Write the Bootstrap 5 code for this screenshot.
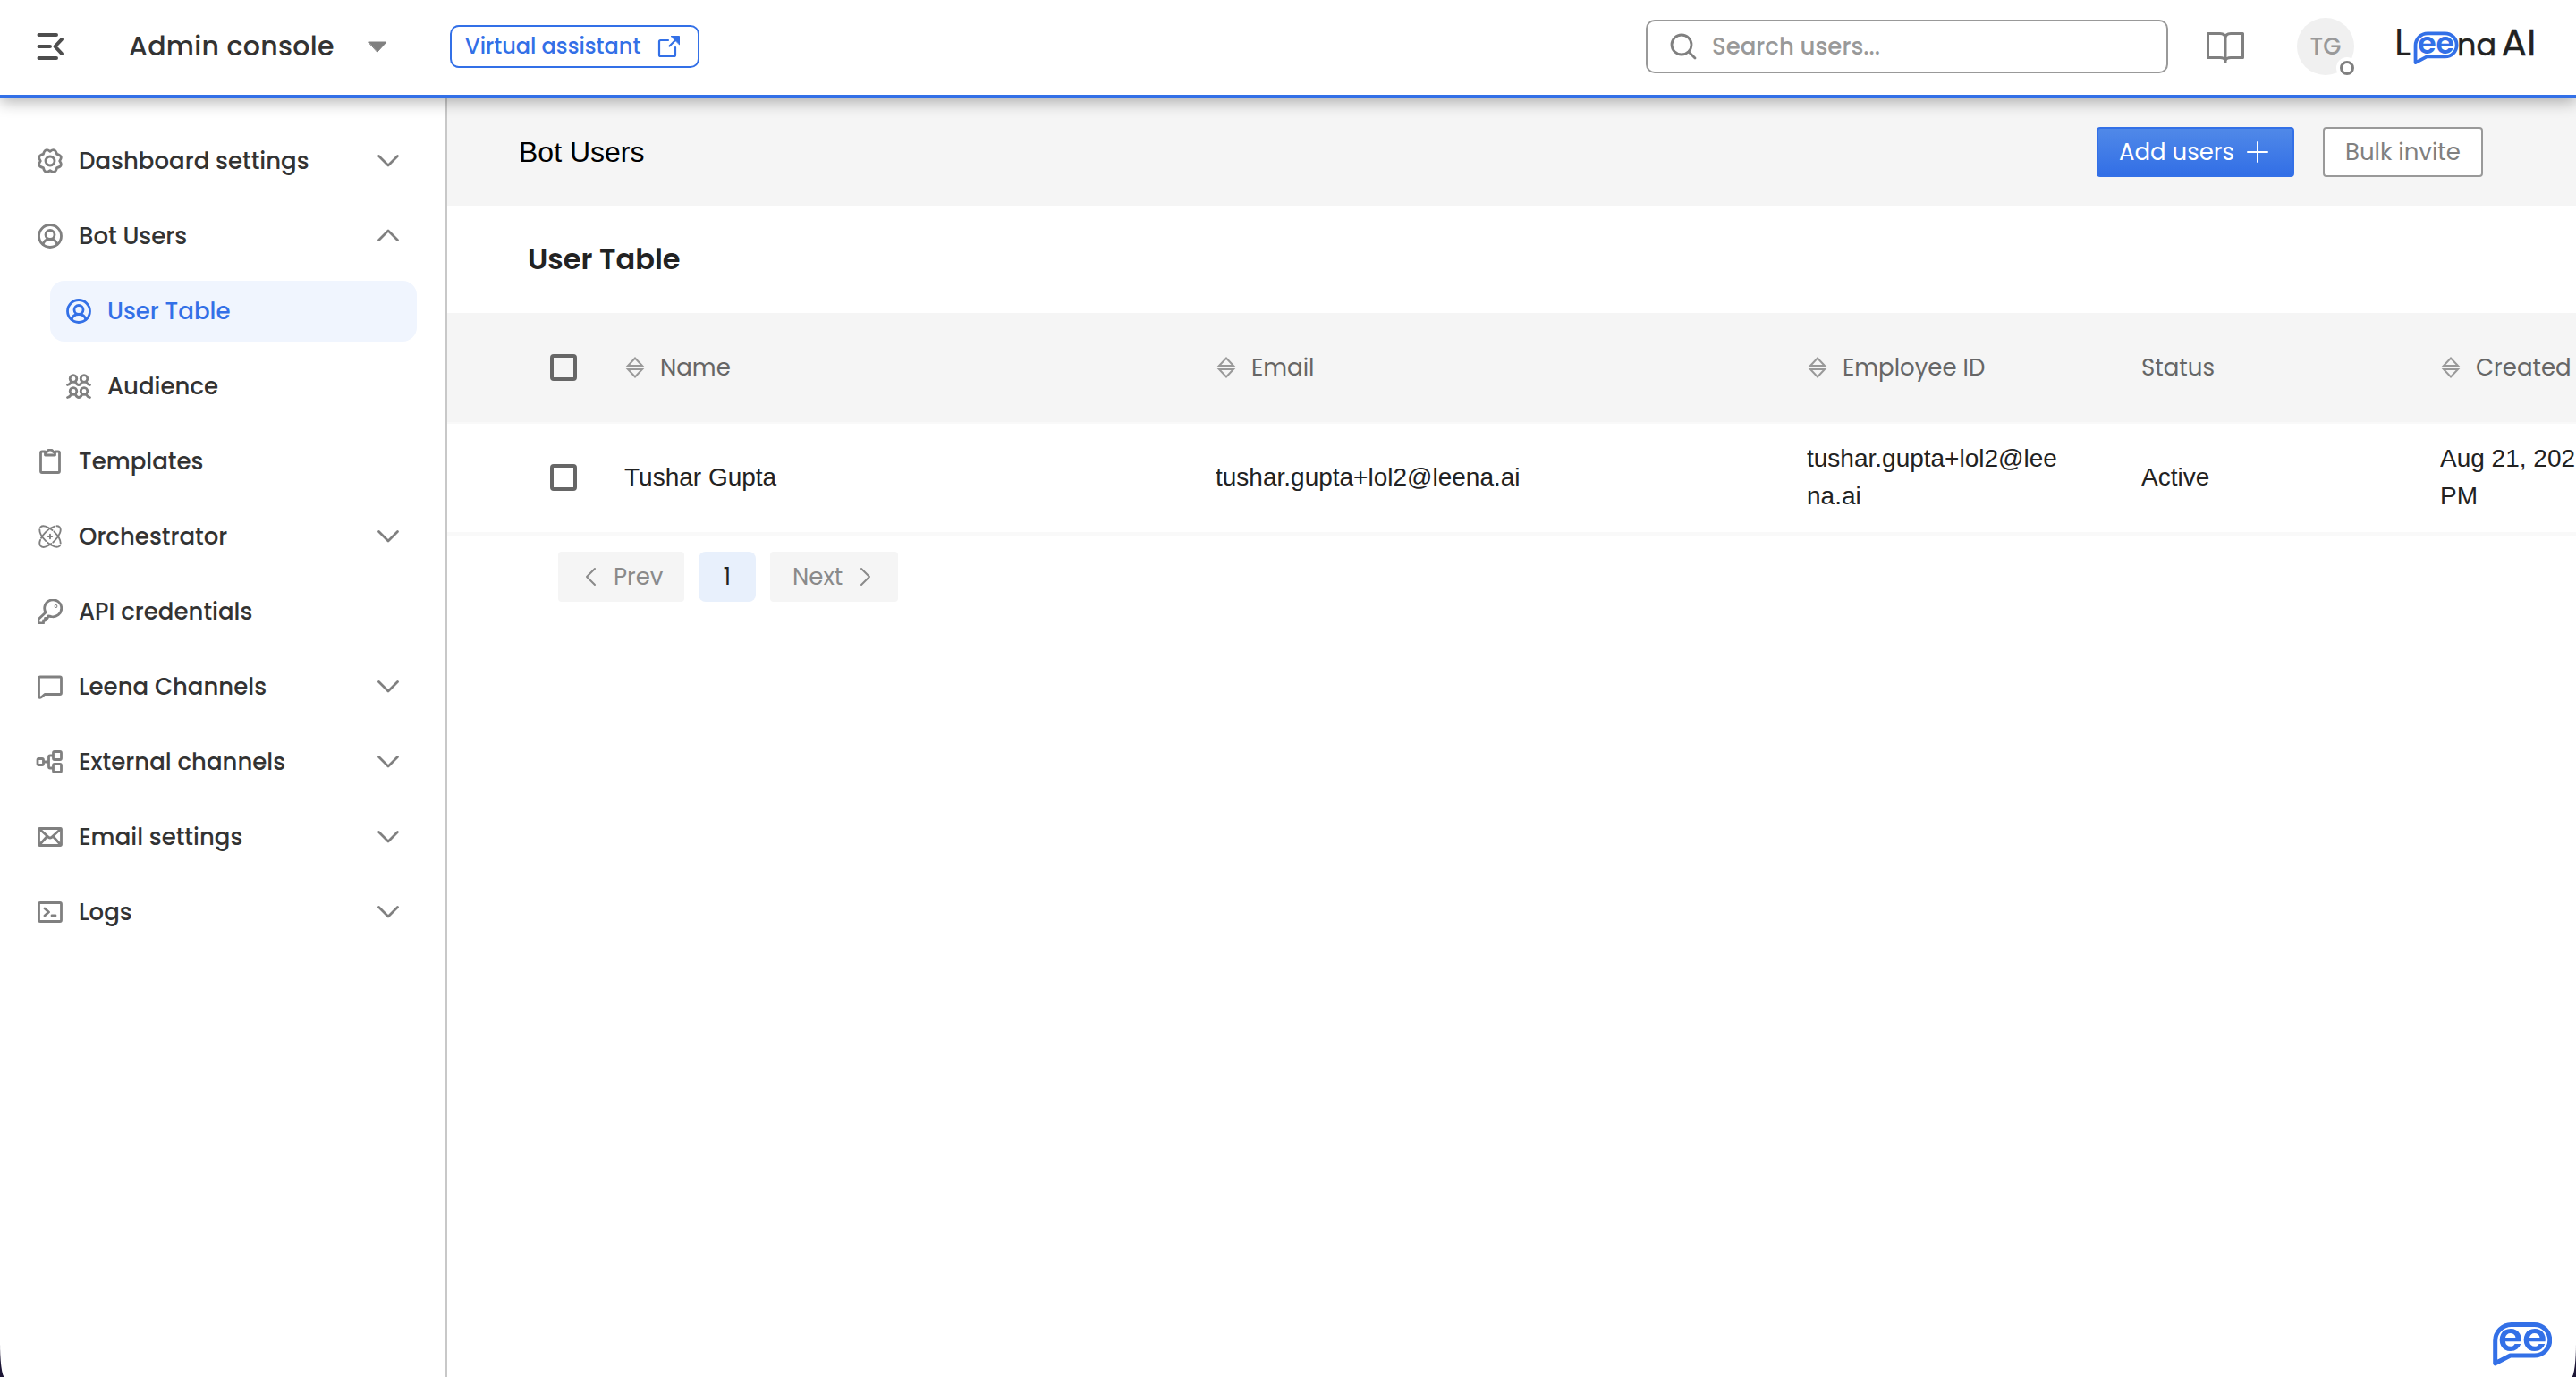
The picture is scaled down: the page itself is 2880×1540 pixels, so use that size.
<!DOCTYPE html>
<html lang="en">
<head>
<meta charset="utf-8">
<title>Admin console</title>
<link href="https://cdn.jsdelivr.net/npm/bootstrap@5.3.0/dist/css/bootstrap.min.css" rel="stylesheet">
<script src="https://cdn.jsdelivr.net/npm/bootstrap@5.3.0/dist/js/bootstrap.bundle.min.js"></script>
<style>
:root{--blue:#3370e7;--grey:#808080;--pop:Poppins,Inter,sans-serif}
body{font-family:var(--pop);font-size:26px;line-height:40px;color:#333;background:#1c1535;overflow:hidden}
svg{fill:none;stroke:currentColor;stroke-linecap:round;stroke-linejoin:round;flex:none;display:block}
.shell{height:1540px;background:#fff;border-radius:0 0 5px 5px / 0 0 38px 38px}
.topbar{height:110px;border-bottom:4px solid var(--blue);box-shadow:0 4px 16px rgba(0,0,0,.3);z-index:5;padding:0 48px 2px 40px}
.console-name{font-size:30px;font-weight:500;letter-spacing:.3px;margin-left:72px;width:267px}
.btn-va{--bs-btn-color:var(--blue);--bs-btn-border-color:var(--blue);--bs-btn-padding-y:0;height:48px;width:279px;margin-left:70px;border:2px solid;border-radius:10px;font-size:24px;font-weight:500;line-height:36px;padding-left:15px;padding-right:19px}
.search-box{width:584px;height:60px;border:2px solid #999;border-radius:10px;padding-left:25px;margin-right:42px;color:#999;font-weight:500}
.search-box svg{color:var(--grey);margin-right:17px}
.avatar{width:64px;height:64px;background:#f0f0f0;color:#999;font-weight:500;font-size:26px;margin-left:58px;margin-right:48px}
.presence{width:24px;height:24px;right:-4px;bottom:-4px;background:#fff}
.presence i{width:16px;height:16px;border:3px solid var(--grey)}
.brand{overflow:visible}
.side{width:500px;border-right:2px solid #c8c8c8;padding:36px 32px 0 0;flex:none}
.side .nav-link{height:68px;padding:0 18px 0 18px;margin-left:24px;margin-bottom:16px;color:#333;font-weight:500;border-radius:16px;gap:18px}
.side .nav-link svg{color:var(--grey);stroke-width:2.8}
.side .sub{margin-left:56px}
.side .sub.active{background:#f0f5fe;color:var(--blue)}
.side .sub.active svg{color:var(--blue)}
.pagebar{height:120px;background:#f5f5f5;padding-left:80px;padding-right:104px}
.pagebar h1{font:32px/48px "Liberation Sans",Arial,sans-serif;color:#000}
.act{height:56px;font-size:26px;line-height:52px;padding:0;border-radius:4px;display:flex;align-items:center;justify-content:center}
.act-add{width:221px;color:#fff;border:2px solid var(--blue);background:linear-gradient(#5089e8,#326fe6);gap:13px;padding-right:3px}
.act-bulk{width:179px;color:var(--grey);border:2px solid #999;background:#fff;margin-left:32px}
.tabletitle{height:120px;padding-left:90px;font-size:32px;font-weight:600;color:#222}
.grid{width:2380px;table-layout:fixed;border-collapse:separate;border-spacing:0}
.grid th,.grid td{padding:0;vertical-align:middle;white-space:nowrap;overflow:hidden}
.grid th{height:124px;background:#f5f5f5;color:#666;font-weight:400;border-bottom:2px solid #f9f9f9}
.grid td{height:125px;font:28px/42px "Liberation Sans",Arial,sans-serif;color:#222;border-bottom:4px solid #f9f9f9;padding-bottom:2px}
.grid .pick{padding-left:115px}
.grid th svg{color:#999}
.sorter{display:flex;align-items:center;gap:17px;padding-left:1px}
.box{width:30px;height:30px;border:4px solid #666;border-radius:4px;display:block}
.pager{padding:18px 0 0 124px;gap:16px}
.pg{height:56px;background:#f5f5f5;color:#8a8a8a;border-radius:4px}
.pg-prev{width:141px;padding-left:29px;gap:19px}
.pg-next{width:143px;padding-left:25px;gap:19px}
.pg-now{width:64px;background:#e8f0fc;color:#222;border-radius:8px}
.chatfab{right:27px;bottom:12px}
.ee{font-family:var(--pop);font-weight:600;fill:var(--blue);stroke:none}
</style>
</head>
<body>
<svg width="0" height="0" class="position-absolute">
  <symbol id="down" viewBox="0 0 28 28"><path d="M3.500 8.500 14 19 24.500 8.500"/></symbol>
  <symbol id="user" viewBox="0 0 28 28"><circle cx="14" cy="14" r="12.500"/><circle cx="14" cy="12.500" r="5"/><path d="M6 23.500C7 19.500 10 17.500 14 17.500s7 2 8 6"/></symbol>
  <symbol id="sort" viewBox="0 0 22 26"><path d="M11 2.500 19 11H3zM11 23.500 19 15H3z" stroke-width="2" stroke-linejoin="miter"/></symbol>
</svg>
<div class="shell d-flex flex-column overflow-hidden">
  <header class="topbar d-flex align-items-center bg-white position-relative flex-shrink-0">
    <svg width="32" height="34" viewBox="0 0 32 34" stroke-width="4" style="color:#4d4d4d"><path d="M3.500 4H23M3.500 17H16M3.500 30H23M29 9 21.500 17 29 25"/></svg>
    <div class="console-name">Admin console</div>
    <svg width="22" height="13" viewBox="0 0 22 13" style="color:#808080"><path d="M1 1H21L11 12z" fill="#808080" stroke-width="1"/></svg>
    <button class="btn btn-va d-flex align-items-center justify-content-between">Virtual assistant
      <svg width="26" height="26" viewBox="0 0 26 26" stroke-width="2.200"><path d="M12 6H3.500Q2 6 2 7.500V22.500Q2 24 3.500 24H18.500Q20 24 20 22.500V14M13.500 12.500 21 5"/><path d="M15.500 1.500H24.500V10.500Z" fill="currentColor" stroke-width="1"/></svg></button>
    <div class="search-box d-flex align-items-center ms-auto"><svg width="30" height="30" viewBox="0 0 30 30" stroke-width="2.800"><circle cx="13" cy="13" r="11"/><path d="m21 21 7 7"/></svg>Search users...</div>
    <svg width="44" height="38" viewBox="0 0 44 38" stroke-width="3" style="color:#808080"><path d="M22 35Q21 31.500 16 31.500H2.500V4.500H16Q22 4.500 22 10Q22 4.500 28 4.500H41.500V31.500H28Q23 31.500 22 35ZM22 9V37"/></svg>
    <div class="avatar rounded-circle d-flex align-items-center justify-content-center position-relative">TG
      <span class="presence position-absolute rounded-circle d-flex align-items-center justify-content-center"><i class="rounded-circle"></i></span></div>
    <svg class="brand" width="152" height="44" viewBox="0 0 152 44" font-family="Poppins,Inter,sans-serif"><g fill="#222" stroke="none"><text x="-3" y="31.500" font-size="42">L</text><text x="67" y="31.500" font-size="34" textLength="44" lengthAdjust="spacingAndGlyphs" stroke="#222" stroke-width=".4">na</text><text x="116.500" y="31.500" font-size="41" textLength="39" lengthAdjust="spacingAndGlyphs" stroke="#222" stroke-width=".3">AI</text></g>
      <g transform="translate(18.500 5.500) scale(.755)"><path d="M2.700 45.800V20.500A18 18 0 0 1 20.700 2.500H46.500A17 17 0 0 1 46.500 37H19.500Z" stroke="#3370e7" stroke-width="5"/><text class="ee" x="6.200" y="32.200" font-size="44" textLength="54" lengthAdjust="spacingAndGlyphs">ee</text></g></svg>
  </header>
  <div class="d-flex flex-grow-1">
    <nav class="side nav flex-column flex-nowrap">
      <a class="nav-link d-flex align-items-center"><svg width="28" height="28" viewBox="-14 -14 28 28"><path d="M0-10.700Q5.900-15 7.600-7.600 15-5.900 10.700 0 15 5.900 7.600 7.600 5.900 15 0 10.700-5.900 15-7.600 7.600-15 5.900-10.700 0-15-5.900-7.600-7.600-5.900-15 0-10.700Z"/><circle r="5"/></svg>Dashboard settings<svg class="ms-auto" width="28" height="28"><use href="#down"/></svg></a>
      <a class="nav-link d-flex align-items-center"><svg width="28" height="28"><use href="#user"/></svg>Bot Users<svg class="ms-auto" width="28" height="28" viewBox="0 0 28 28"><path d="M3.500 18.500 14 8 24.500 18.500"/></svg></a>
      <a class="nav-link sub active d-flex align-items-center"><svg width="28" height="28"><use href="#user"/></svg>User Table</a>
      <a class="nav-link sub d-flex align-items-center"><svg width="28" height="28" viewBox="0 0 28 28"><g id="pair"><circle cx="8" cy="5.500" r="3.800"/><circle cx="20" cy="5.500" r="3.800"/><path d="M1.500 12.500Q4 12 5.500 9.500M10.500 9.500Q12 12.500 14 12.500T17.500 9.500M22.500 9.500Q24 12 26.500 12.500"/></g><use href="#pair" y="14"/></svg>Audience</a>
      <a class="nav-link d-flex align-items-center"><svg width="28" height="28" viewBox="0 0 28 28"><path d="M8 3H5Q3.500 3 3.500 4.500V25Q3.500 26.500 5 26.500H23Q24.500 26.500 24.500 25V4.500Q24.500 3 23 3H20M8.500 7V3.500H10.500Q11 1 14 1T17.500 3.500H19.500V7Z"/></svg>Templates</a>
      <a class="nav-link d-flex align-items-center"><svg width="28" height="28" viewBox="0 0 28 28"><g stroke-width="1.900"><ellipse cx="14" cy="14" rx="15" ry="7" transform="rotate(45 14 14)" stroke-dasharray="15 2.500"/><ellipse cx="14" cy="14" rx="15" ry="7" transform="rotate(-45 14 14)" stroke-dasharray="20 2.500"/><path d="M14 11.800V16.200M11.800 14H16.200"/></g></svg>Orchestrator<svg class="ms-auto" width="28" height="28"><use href="#down"/></svg></a>
      <a class="nav-link d-flex align-items-center"><svg width="28" height="28" viewBox="0 0 28 28"><path d="M9 15A9.500 9.500 0 1 1 15 19.500L12 19 11 21.500H8.500V24H6.500V27H2.500Q1 27 1 25.500V22.500Z"/><circle cx="20.500" cy="8" r=".5"/></svg>API credentials</a>
      <a class="nav-link d-flex align-items-center"><svg width="28" height="28" viewBox="0 0 28 28"><path d="M3 3H25Q26.500 3 26.500 4.500V21Q26.500 22.500 25 22.500H8L4.500 25.500Q1.500 27.500 1.500 25V4.500Q1.500 3 3 3Z"/></svg>Leena Channels<svg class="ms-auto" width="28" height="28"><use href="#down"/></svg></a>
      <a class="nav-link d-flex align-items-center"><svg width="28" height="28" viewBox="0 0 28 28" overflow="visible"><rect x="0" y="10.500" width="6.500" height="7" rx="1.500"/><rect x="17.500" y="2.500" width="9" height="9" rx="1.500"/><rect x="17.500" y="16.500" width="9" height="9" rx="1.500"/><path d="M7 14H12M17 7H14Q12.500 7 12.500 8.500V19.500Q12.500 21 14 21H17"/></svg>External channels<svg class="ms-auto" width="28" height="28"><use href="#down"/></svg></a>
      <a class="nav-link d-flex align-items-center"><svg width="28" height="28" viewBox="0 0 28 28"><rect x="1.500" y="4.500" width="25" height="19" rx="1"/><path d="M2 5 12.500 14.500Q14 15.500 15.500 14.500L26 5M2 23 10.500 13.500M26 23 17.500 13.500"/></svg>Email settings<svg class="ms-auto" width="28" height="28"><use href="#down"/></svg></a>
      <a class="nav-link d-flex align-items-center"><svg width="28" height="28" viewBox="0 0 28 28"><rect x="1.500" y="3.500" width="25" height="21" rx="1.500"/><path d="M8 10 12.500 14 8 18M16 18H20"/></svg>Logs<svg class="ms-auto" width="28" height="28"><use href="#down"/></svg></a>
    </nav>
    <main class="flex-grow-1 overflow-hidden">
      <div class="pagebar d-flex align-items-center">
        <h1 class="m-0 me-auto">Bot Users</h1>
        <button class="btn act act-add">Add users<svg width="26" height="26" viewBox="0 0 26 26" stroke-width="2"><path d="M13 2V24M2 13H24"/></svg></button>
        <button class="btn act act-bulk">Bulk invite</button>
      </div>
      <div class="tabletitle d-flex align-items-center">User Table</div>
      <table class="grid">
        <colgroup><col style="width:198px"><col style="width:661px"><col style="width:661px"><col style="width:374px"><col style="width:334px"><col></colgroup>
        <thead><tr>
          <th class="pick"><span class="box"></span></th>
          <th><span class="sorter"><svg width="22" height="26"><use href="#sort"/></svg>Name</span></th>
          <th><span class="sorter"><svg width="22" height="26"><use href="#sort"/></svg>Email</span></th>
          <th><span class="sorter"><svg width="22" height="26"><use href="#sort"/></svg>Employee ID</span></th>
          <th>Status</th>
          <th><span class="sorter"><svg width="22" height="26"><use href="#sort"/></svg>Created</span></th>
        </tr></thead>
        <tbody><tr>
          <td class="pick"><span class="box"></span></td>
          <td>Tushar Gupta</td><td>tushar.gupta+lol2@leena.ai</td><td>tushar.gupta+lol2@lee<br>na.ai</td><td>Active</td><td>Aug 21, 202<br>PM</td>
        </tr></tbody>
      </table>
      <div class="pager d-flex">
        <span class="pg pg-prev d-flex align-items-center"><svg width="14" height="22" viewBox="0 0 14 22" stroke-width="2"><path d="M12 2 3 11l9 9"/></svg>Prev</span>
        <span class="pg pg-now d-flex align-items-center justify-content-center">1</span>
        <span class="pg pg-next d-flex align-items-center">Next<svg width="14" height="22" viewBox="0 0 14 22" stroke-width="2"><path d="m2 2 9 9-9 9"/></svg></span>
      </div>
    </main>
  </div>
</div>
<svg class="chatfab position-fixed" width="66" height="49" viewBox="0 0 66 49"><path d="M2.700 45.800V20.500A18 18 0 0 1 20.700 2.500H46.500A17 17 0 0 1 46.500 37H19.500Z" stroke="#3370e7" stroke-width="5"/><text class="ee" x="6.200" y="32.200" font-size="44" textLength="54" lengthAdjust="spacingAndGlyphs">ee</text></svg>
</body>
</html>
